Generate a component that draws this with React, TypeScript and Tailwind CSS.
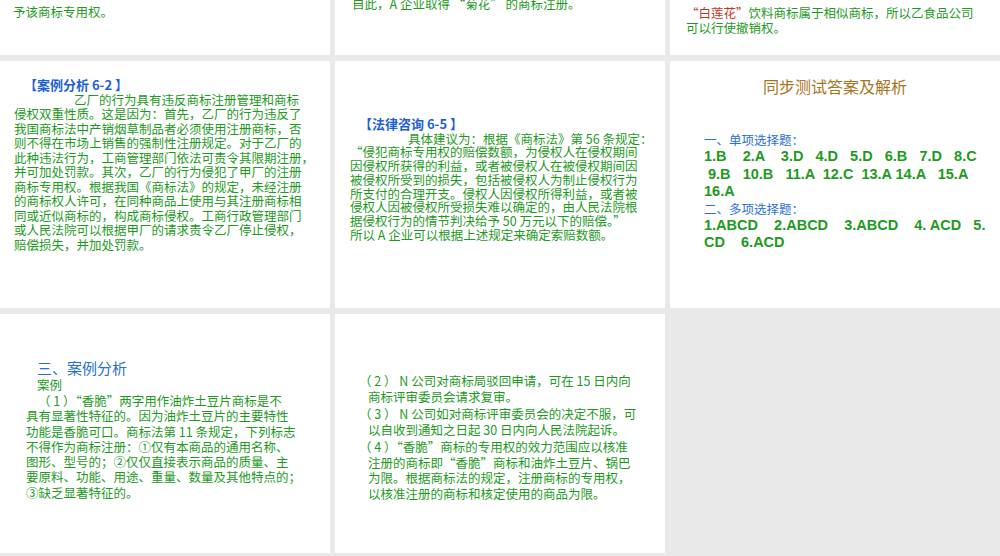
const L = ({ t, className = "" }: { t: string; className?: string }) => <div className={`whitespace-nowrap ${className}`}>{t}</div>;

export default function App() {
  const f = { fontFamily: '"Noto Sans CJK SC", "Liberation Sans", sans-serif' };
  const g = "text-[#1e9a1e]";
  const s1 = [
    "侵权双重性质。这是因为：首先，乙厂的行为违反了",
    "我国商标法中产销烟草制品者必须使用注册商标，否",
    "则不得在市场上销售的强制性注册规定。对于乙厂的",
    "此种违法行为，工商管理部门依法可责令其限期注册，",
    "并可加处罚款。其次，乙厂的行为侵犯了甲厂的注册",
    "商标专用权。根据我国《商标法》的规定，未经注册",
    "的商标权人许可，在同种商品上使用与其注册商标相",
    "同或近似商标的，构成商标侵权。工商行政管理部门",
    "或人民法院可以根据甲厂的请求责令乙厂停止侵权，",
    "赔偿损失，并加处罚款。",
  ];
  const s2 = [
    "“侵犯商标专用权的赔偿数额，为侵权人在侵权期间",
    "因侵权所获得的利益，或者被侵权人在被侵权期间因",
    "被侵权所受到的损失，包括被侵权人为制止侵权行为",
    "所支付的合理开支。侵权人因侵权所得利益，或者被",
    "侵权人因被侵权所受损失难以确定的，由人民法院根",
    "据侵权行为的情节判决给予 50 万元以下的赔偿。”",
    "所以 A 企业可以根据上述规定来确定索赔数额。",
  ];
  const s3 = [
    "具有显著性特征的。因为油炸土豆片的主要特性",
    "功能是香脆可口。商标法第 11 条规定，下列标志",
    "不得作为商标注册：①仅有本商品的通用名称、",
    "图形、型号的；②仅仅直接表示商品的质量、主",
    "要原料、功能、用途、重量、数量及其他特点的；",
    "③缺乏显著特征的。",
  ];
  return (
    <div style={f} className="w-[1000px] h-[556px] bg-[#e9e9e9] grid grid-cols-[330px_330px_330px] grid-rows-[55px_247px_239px] gap-x-[5px] gap-y-[6px] overflow-hidden">
      <div className={`bg-white overflow-hidden text-[12.5px] leading-[15px] ${g} pl-[13px] pt-[4px]`}>
        <L t="予该商标专用权。" />
      </div>
      <div className={`bg-white overflow-hidden text-[12.5px] leading-[15px] ${g} pl-[17px]`}>
        <L t="自此，A 企业取得 “菊花” 的商标注册。" className="-mt-[4px]" />
      </div>
      <div className={`bg-white overflow-hidden text-[12.5px] leading-[15px] ${g} pl-[16px] pt-[5px]`}>
        <div className="whitespace-nowrap"><span className="text-[#c8361a]">“白莲花”</span>饮料商标属于相似商标，所以乙食品公司</div>
        <L t="可以行使撤销权。" />
      </div>

      <div className={`bg-white overflow-hidden text-[12.5px] leading-[14.5px] ${g} pl-[14px] pt-[17px]`}>
        <L t="【案例分析 6-2 】" className="text-[#1f5fd6] font-bold text-[13px] pl-[10px]" />
        <L t="乙厂的行为具有违反商标注册管理和商标" className="pl-[60px]" />
        {s1.map((t, i) => <L key={i} t={t} />)}
      </div>
      <div className={`bg-white overflow-hidden text-[12.5px] leading-[13.7px] ${g} pl-[15px] pt-[56px]`}>
        <L t="【法律咨询 6-5 】" className="text-[#1f5fd6] font-bold text-[13px] pl-[9px] mb-[1px]" />
        <L t="具体建议为：根据《商标法》第 56 条规定：" className="pl-[58px]" />
        {s2.map((t, i) => <L key={i} t={t} />)}
      </div>
      <div className="bg-white overflow-hidden pl-[34px] pt-[15px]">
        <div className="text-[#a8761e] text-[16px] leading-[20px] text-center -ml-[34px]">同步测试答案及解析</div>
        <div className="mt-[36px] text-[#2a6fd8] text-[12.5px] leading-[16px]">一、单项选择题：</div>
        <div className={`${g} text-[14.5px] leading-[17.5px] whitespace-pre`} style={{ fontFamily: '"Liberation Sans", sans-serif', fontWeight: 600 }}>
          <div>{"1.B    2.A    3.D   4.D   5.D   6.B   7.D   8.C"}</div>
          <div>{" 9.B   10.B   11.A  12.C  13.A 14.A   15.A"}</div>
          <div>16.A</div>
        </div>
        <div className="text-[#2a6fd8] text-[12.5px] leading-[16px]">二、多项选择题：</div>
        <div className={`${g} text-[14.5px] leading-[17.5px] whitespace-pre`} style={{ fontFamily: '"Liberation Sans", sans-serif', fontWeight: 600 }}>
          <div>{"1.ABCD    2.ABCD    3.ABCD    4. ACD   5."}</div>
          <div>{"CD    6.ACD"}</div>
        </div>
      </div>

      <div className={`bg-white overflow-hidden text-[12.5px] leading-[15.3px] ${g} pl-[26px] pt-[45px]`}>
        <L t="三、案例分析" className="text-[#2a6fd8] text-[15px] leading-[18px] pl-[11px]" />
        <L t="案例" className="pl-[11px] leading-[16px]" />
        <L t="（ 1 ）“香脆”两字用作油炸土豆片商标是不" className="pl-[12px]" />
        {s3.map((t, i) => <L key={i} t={t} />)}
      </div>
      <div className={`bg-white overflow-hidden text-[12.5px] leading-[15.5px] ${g} pl-[24px] pt-[59px]`}>
        <div className="mb-[2px]">
          <L t="（ 2 ） N 公司对商标局驳回申请，可在 15 日内向" />
          <L t="商标评审委员会请求复审。" className="pl-[9px]" />
        </div>
        <div className="mb-[2px]">
          <L t="（ 3 ） N 公司如对商标评审委员会的决定不服，可" />
          <L t="以自收到通知之日起 30 日内向人民法院起诉。" className="pl-[9px]" />
        </div>
        <div>
          <L t="（ 4 ）“香脆”商标的专用权的效力范围应以核准" />
          <L t="注册的商标即“香脆”商标和油炸土豆片、锅巴" className="pl-[9px]" />
          <L t="为限。根据商标法的规定，注册商标的专用权，" className="pl-[9px]" />
          <L t="以核准注册的商标和核定使用的商品为限。" className="pl-[9px]" />
        </div>
      </div>
      <div className="bg-[#e9e9e9]"></div>
    </div>
  );
}
